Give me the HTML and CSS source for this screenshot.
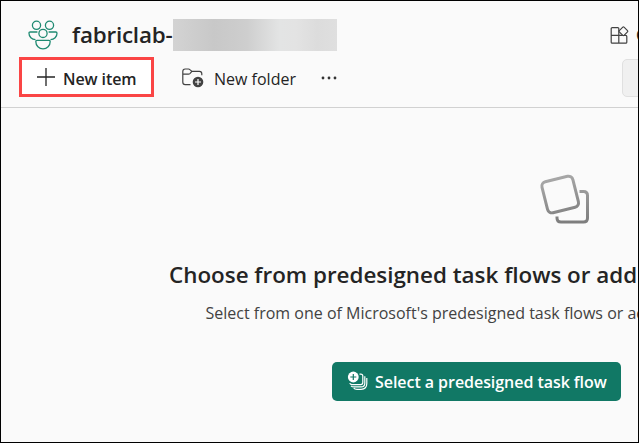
FILE: index.html
```html
<!DOCTYPE html>
<html lang="en">
<head>
<meta charset="utf-8">
<title>fabriclab</title>
<link rel="stylesheet" href="styles.css">
</head>
<body>
<div class="window">
  <header class="header">
    <div class="title-row">
      <svg class="workspace-icon" width="30" height="30" viewBox="0 0 30 30" fill="none" stroke="#1f8a72" stroke-width="1.3">
        <circle cx="8.5" cy="5.3" r="4.1"/><circle cx="21.5" cy="5.3" r="4.1"/><circle cx="15" cy="13.4" r="4.1"/>
        <path d="M9.4 12H2.2q-1.2 0-1.2 1.2c0 3.6 2.8 6.3 6.5 6.4M20.6 12h7.2q1.2 0 1.2 1.2c0 3.6-2.8 6.3-6.5 6.4M9 20.4h12q1.2 0 1.2 1.2c0 4.2-3.2 7.2-7.2 7.2s-7.2-3-7.2-7.2q0-1.2 1.2-1.2z"/>
      </svg>
      <h1 class="title">fabriclab-</h1>
      <span class="redacted"></span>
      <div class="apps">
        <svg width="19" height="19" viewBox="0 0 19 19" fill="none" stroke="#424242" stroke-width="1.2">
          <path d="M8.8 9.4V2.6q0-1-1-1H2.2q-1 0-1 1v13.6q0 1 1 1h13.6q1 0 1-1v-5.8q0-1-1-1H1.2M8.8 9.4v7.8"/>
          <path d="M12.8 1.1q.6-.6 1.2 0l3.5 3.5q.6.6 0 1.2L14 9.3q-.6.6-1.2 0L9.3 5.8q-.6-.6 0-1.2z" fill="#fafafa"/>
        </svg>
        <span class="apps-label">Create app</span>
      </div>
    </div>
    <div class="toolbar">
      <button class="new-item">
        <svg width="20" height="20" viewBox="0 0 20 20" stroke="#242424" stroke-width="1.3"><path d="M10 1v18M1 10h18"/></svg>
        <span class="new-item-label">New item</span>
      </button>
      <button class="new-folder">
        <svg width="22" height="20" viewBox="0 0 22 20" fill="none" stroke="#424242" stroke-width="1.2">
          <path d="M8.5 16.6H3.2Q.8 16.6.8 14.2V3.4Q.8 1 3.2 1h3.3q.8 0 1.4.6l2 1.8h7.5q2.4 0 2.4 2.4v1.5M.8 6.2h5.7q.8 0 1.4-.6l2-2.2"/>
          <circle cx="16" cy="14" r="5.3" fill="#424242" stroke="none"/><path d="M16 11v6M13 14h6" stroke="#fff"/>
        </svg>
        <span class="new-folder-label">New folder</span>
      </button>
      <svg class="more" width="16" height="4" viewBox="0 0 16 4" fill="#333"><circle cx="2" cy="2" r="1.4"/><circle cx="8" cy="2" r="1.4"/><circle cx="14" cy="2" r="1.4"/></svg>
      <div class="filter"></div>
    </div>
  </header>
  <main class="empty-state">
    <svg class="flow-icon" width="52" height="52" viewBox="0 0 52 52" fill="none" stroke="url(#shade)" stroke-width="3">
      <defs><linearGradient id="shade" gradientUnits="userSpaceOnUse" x1="0" y1="0" x2="0" y2="50"><stop offset="0" stop-color="#aaa"/><stop offset="1" stop-color="#7c7c7c"/></linearGradient></defs>
      <rect x="5.3" y="4.6" width="31.8" height="31.8" rx="4.5" transform="rotate(-14 21.2 20.5)"/>
      <path d="M40.5 17.5h4q4 0 4 4v22.500q0 4-4 4h-22.500q-4 0-4-4v-1.500"/>
    </svg>
    <h2 class="headline">Choose from predesigned task flows or add a task</h2>
    <p class="hint">Select from one of Microsoft's predesigned task flows or add a task</p>
    <button class="select-flow">
      <svg width="22" height="21" viewBox="0 0 22 21" fill="none" stroke="#fff" stroke-width="1.2">
        <path d="M12.5 3.1h1.3q2 0 2 2v6.5q0 2-2 2H5.5q-2.2 0-2.8-1.5M17.8 5.2v7q0 3.7-3.7 3.7H7.2Q5 15.9 4 14.8M19.8 7v5.6q0 5.7-5.7 5.7H10q-2.3 0-3.3-1.2"/>
        <circle cx="6.3" cy="6" r="5.4" fill="#fff" stroke="none"/><path d="M6.3 3v6M3.3 6h6" stroke="#117865"/>
      </svg>
      <span class="select-label">Select a predesigned task flow</span>
    </button>
  </main>
</div>
</body>
</html>
```

FILE: styles.css
```css
* { box-sizing: border-box; }
body { margin: 0; color: #242424; font-family: "Open Sans", "Noto Sans", sans-serif; }
button { display: flex; align-items: center; margin: 0; padding: 0; border: 0; background: none; color: inherit; font: inherit; }
svg { display: block; flex: none; }
.window { width: 639px; height: 443px; border: 1px solid #000; background: #fafafa; overflow: hidden; white-space: nowrap; }
.header { height: 107px; padding: 17px 0 0 18px; border-bottom: 1px solid #d1d1d1; }
.title-row { display: flex; height: 34px; align-items: center; }
.workspace-icon { margin: 0 14px 0 9px; }
.title { flex: none; width: 101px; margin: 0; font-size: 22.4px; line-height: 32px; font-weight: 600; letter-spacing: -0.2px; }
.redacted { flex: none; width: 164px; height: 32px; background: linear-gradient(90deg, #d3d3d3, #c8c8c8 25%, #cecece 45%, #e3e4e4 65%, #e3e3e3 75%, #dcdcdc 88%, #dfdfdf); }
.apps { display: flex; flex: none; align-items: center; gap: 7px; margin-left: 273px; }
.apps-label { font-size: 16px; }
.toolbar { display: flex; align-items: center; height: 40px; margin-top: 5px; font-size: 16px; line-height: 24px; }
.new-item { flex: none; width: 135px; height: 40px; padding-left: 14px; gap: 7px; border: 3px solid #fa4545; background: #fff; font-weight: 600; }
.new-item-label { padding-top: 3px; letter-spacing: -0.1px; }
.new-folder { flex: none; width: 115px; margin-left: 28px; gap: 10px; }
.new-folder svg { margin-top: 2px; }
.new-folder-label { padding-top: 3px; }
.more { margin: 2px 0 0 24px; }
.filter { flex: none; width: 60px; height: 38px; margin: 1px 0 0 285px; border: 1px solid #e0e0e0; border-radius: 5px; background: #f0f0f0; }
.empty-state { padding: 66px 0 0 168px; }
.flow-icon { margin-left: 370px; }
.headline { margin: 33px 0 0; font-size: 22.4px; line-height: 32px; font-weight: 600; }
.hint { margin: 10px 0 0 36.5px; color: #424242; font-size: 16px; line-height: 24px; }
.select-flow { width: 289px; height: 39px; margin: 37px 0 0 163px; padding-left: 15px; gap: 6px; border-radius: 5px; background: #117865; color: #fff; font-size: 16px; font-weight: 600; letter-spacing: -0.05px; }
```
